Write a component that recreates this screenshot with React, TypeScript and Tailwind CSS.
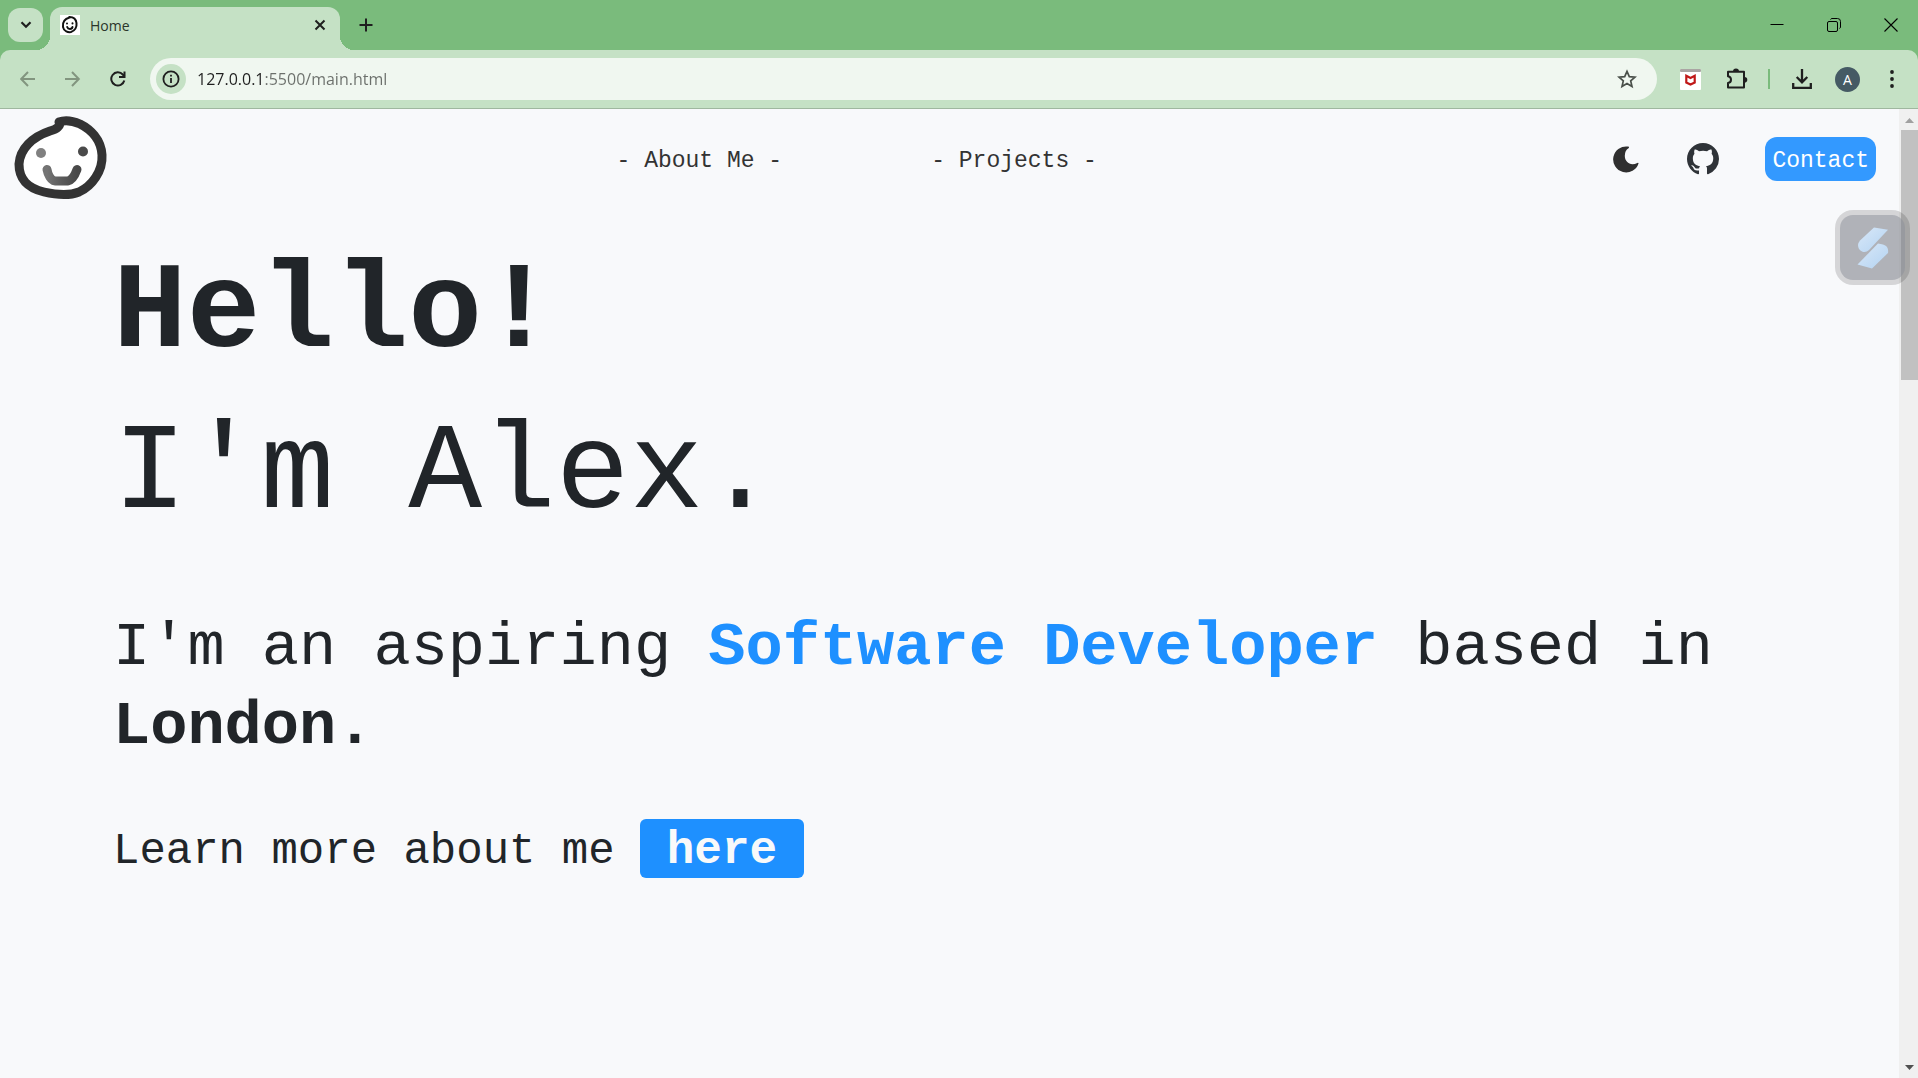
import { BsGithub } from "react-icons/bs";

function SmileLogo({ className }: { className: string }) {
  return (
    <svg viewBox="0 0 94 84" className={className} aria-hidden="true">
      <defs>
        <linearGradient id="mouth" x1="0" x2="1" y1="0" y2="0">
          <stop offset="0" stopColor="#747474" />
          <stop offset="0.5" stopColor="#5a5a5a" />
          <stop offset="1" stopColor="#484848" />
        </linearGradient>
      </defs>
      <path
        d="M45 5C47 9 43 12 36 14C18 20 6 32 5 47C5 63 14 71 30 75C43 78 55 79 65 75C78 69 89 54 88 38C87 22 76 12 66 7C58 3.500 50 3 45 5Z"
        fill="#ffffff"
        stroke="#333333"
        strokeWidth="9"
        strokeLinejoin="round"
      />
      <circle cx="27" cy="36" r="5" fill="#808080" />
      <circle cx="69" cy="34.500" r="5" fill="#4a4a4a" />
      <path d="M33 52.500C34 58 37 63 41 64H54C58 63 61 58 63 52.500" fill="none" stroke="url(#mouth)" strokeWidth="9" strokeLinecap="round" strokeLinejoin="round" />
    </svg>
  );
}

function TabStrip() {
  return (
    <div className="flex h-[50px] items-end bg-[#7abb7c] pl-2">
      <button aria-label="Search tabs" className="mb-2 flex h-[34px] w-[35px] items-center justify-center rounded-xl bg-[#c5e1c5]">
        <svg viewBox="0 0 12 8" className="h-2 w-3" fill="none" stroke="#1f1f1f" strokeWidth="2.2">
          <path d="M1.5 1.2L6 5.7L10.5 1.2" />
        </svg>
      </button>
      <span className="-ml-[7px] size-3.5 bg-[radial-gradient(circle_at_0_0,transparent_14px,#c5e1c5_14px)]" />
      <div className="flex h-[43px] w-[290px] items-center rounded-t-xl bg-[#c5e1c5] pb-[7px] pl-2.5 pr-3.5">
        <span className="flex size-5 items-center justify-center bg-white">
          <svg viewBox="0 0 20 20" className="size-5" fill="none" stroke="#111111" strokeLinecap="round">
            <path d="M9.5 2.5C4 4 2.5 8 3 12C4 16.500 8 17.500 11 17C15 16 17 12 16.500 8C16 4 13 2 9.500 2Z" strokeWidth="2" />
            <path d="M7 8.500V8.600M12.500 8.300V8.400" strokeWidth="2" />
            <path d="M7.200 12C8 14.500 12 14.500 12.500 12" strokeWidth="2" />
          </svg>
        </span>
        <span className="ml-2.5 flex-1 font-['Open_Sans',sans-serif] text-[14px] text-[#2a352a]">Home</span>
        <button aria-label="Close tab">
          <svg viewBox="0 0 12 12" className="size-3" fill="none" stroke="#1f1f1f" strokeWidth="2">
            <path d="M1.500 1.500L10.500 10.500M10.500 1.500L1.500 10.500" />
          </svg>
        </button>
      </div>
      <span className="size-3.5 bg-[radial-gradient(circle_at_100%_0,transparent_14px,#c5e1c5_14px)]" />
      <button aria-label="New tab" className="mb-[18px] ml-[5px]">
        <svg viewBox="0 0 14 14" className="size-3.5" stroke="#1f1f1f" strokeWidth="2">
          <path d="M7 .5V13.500M.5 7H13.500" />
        </svg>
      </button>
      <div className="mb-[18px] ml-auto mr-5 flex items-center gap-[43px]">
        <button aria-label="Minimize">
          <svg viewBox="0 0 14 14" className="size-3.5" stroke="#000000">
            <path d="M.5 6.500H13.500" />
          </svg>
        </button>
        <button aria-label="Restore">
          <svg viewBox="0 0 14 14" className="size-3.5" fill="none" stroke="#000000">
            <rect x=".5" y="3.500" width="10" height="10" rx="1.500" />
            <path d="M3.500 1.500Q4 .5 5 .5H10.500Q13.500 .5 13.500 3.500V9Q13.500 10 12.500 10.500" />
          </svg>
        </button>
        <button aria-label="Close">
          <svg viewBox="0 0 14 14" className="size-3.5" stroke="#000000" strokeWidth="1.100">
            <path d="M.5 .5L13.500 13.500M13.500 .5L.5 13.500" />
          </svg>
        </button>
      </div>
    </div>
  );
}

function Toolbar() {
  return (
    <div className="bg-[#7abb7c]">
      <div className="flex h-[59px] items-center rounded-t-[10px] border-b border-[#9fb79f] bg-[#c5e1c5] pr-6">
        <div className="flex w-[150px] items-center gap-[29px] pl-5">
          <button aria-label="Back">
            <svg viewBox="0 0 16 16" className="size-4" fill="none" stroke="#82957f" strokeWidth="2">
              <path d="M15 8H1.500M8 1L1.200 8L8 15" />
            </svg>
          </button>
          <button aria-label="Forward">
            <svg viewBox="0 0 16 16" className="size-4" fill="none" stroke="#82957f" strokeWidth="2">
              <path d="M0 8H14M7 1L13.800 8L7 15" />
            </svg>
          </button>
          <button aria-label="Reload">
            <svg viewBox="0 0 16 16" className="size-4" fill="none" stroke="#1f1f1f" strokeWidth="2">
              <path d="M14.300 9.500A6.600 6.600 0 1 1 12.800 3.500L14.500 5.500" />
              <path d="M14.500 .5V6H9" />
            </svg>
          </button>
        </div>
        <div className="flex h-[42px] flex-1 items-center rounded-full bg-[#f0f7f0] pl-1.5 pr-5">
          <button aria-label="View site information" className="flex size-[30px] items-center justify-center rounded-full bg-[#c5e1c5]">
            <svg viewBox="0 0 18 18" className="size-[18px]" fill="none" stroke="#1f1f1f" strokeWidth="1.800">
              <circle cx="9" cy="9" r="7.600" />
              <path d="M9 8V13M9 4.800V6.600" />
            </svg>
          </button>
          <input
            aria-label="Address"
            defaultValue="127.0.0.1:5500/main.html"
            className="ml-[11px] min-w-0 flex-1 bg-linear-to-r from-[#1f1f1f] from-[67px] to-[#6b6f6b] to-[67px] bg-clip-text font-['Open_Sans',sans-serif] text-[16px] text-transparent outline-none"
          />
          <button aria-label="Bookmark this tab">
            <svg viewBox="0 0 20 20" className="size-5" fill="none" stroke="#4a504a" strokeWidth="1.700">
              <path d="M10 2.300L12.300 7.600L18 8.100L13.700 11.900L15 17.500L10 14.500L5 17.500L6.300 11.900L2 8.100L7.700 7.600Z" />
            </svg>
          </button>
        </div>
        <button aria-label="McAfee WebAdvisor" className="ml-[23px]">
          <svg viewBox="0 0 21 21" className="size-[21px]">
            <rect width="21" height="21" rx="1" fill="#ffffff" />
            <rect width="21" height="3" rx="1" fill="#aaa5a3" />
            <path d="M6.300 6.800L10.500 9L14.700 6.800V13.500L10.500 15.500L6.300 13.500Z" fill="none" stroke="#c01818" strokeWidth="2.200" />
          </svg>
        </button>
        <button aria-label="Extensions" className="ml-[25px]">
          <svg viewBox="0 0 22 22" className="size-[22px]">
            <path d="M2 3.800H18V19.500H2V15Q5 14.500 5 11.700Q5 9 2 8.300Z" fill="none" stroke="#1f1f1f" strokeWidth="2" strokeLinejoin="round" />
            <path d="M7 3.500A3 3 0 0 1 13 3.500ZM18.500 9A2.800 2.800 0 0 1 18.500 14.600Z" fill="#1f1f1f" />
          </svg>
        </button>
        <span className="ml-5 h-5 w-0.5 bg-[#7abb7c]" />
        <button aria-label="Downloads" className="ml-[22px]">
          <svg viewBox="0 0 20 20" className="size-5" fill="none" stroke="#1f1f1f" strokeWidth="2.300">
            <path d="M10 0V13M4.700 8L10 13.300L15.300 8M1.200 14V18.800H18.800V14" />
          </svg>
        </button>
        <button aria-label="Profile" className="ml-[23px] flex size-[25px] items-center justify-center rounded-full bg-[#455a64] font-['Open_Sans',sans-serif] text-[14px] text-white">
          A
        </button>
        <button aria-label="Menu" className="ml-[30px]">
          <svg viewBox="0 0 4 18" className="h-[18px] w-1" fill="#1f1f1f">
            <circle cx="2" cy="2" r="1.900" />
            <circle cx="2" cy="9" r="1.900" />
            <circle cx="2" cy="16" r="1.900" />
          </svg>
        </button>
      </div>
    </div>
  );
}

function SiteHeader() {
  return (
    <header className="flex h-[100px] items-center justify-between pl-3.5 pr-[23px] text-[23px] text-[#333333]">
      <a href="#home" aria-label="Home">
        <SmileLogo className="h-[84px] w-[94px] overflow-visible" />
      </a>
      <nav className="mr-2 flex gap-[149px] pt-1">
        <a href="#about">- About Me -</a>
        <a href="#projects">- Projects -</a>
      </nav>
      <div className="flex items-center">
        <button aria-label="Toggle dark mode">
          <svg viewBox="0 0 26 27" className="h-[27px] w-[26px]" fill="#2f2f2f">
            <path d="M15.200 .6A13 13 0 1 0 25.600 17.200Q25.300 16.300 24.300 16.900C18 20.500 11.800 16.500 11.800 9.800Q11.800 4.500 15.500 2.200Q16.700 1 15.200 .6Z" />
          </svg>
        </button>
        <a href="#github" aria-label="GitHub" className="ml-12">
          <BsGithub className="size-8 text-[#2f3338]" />
        </a>
        <a href="#contact" className="ml-[46px] flex h-11 items-center rounded-xl bg-[#3399ff] px-[7px] pt-1 text-white">
          Contact
        </a>
      </div>
    </header>
  );
}

function Hero() {
  return (
    <main className="px-[113px] pt-6 text-[#212529]">
      <h1 className="text-[123px] leading-[161px]">
        <strong className="block font-bold">Hello!</strong>
        I'm Alex.
      </h1>
      <p className="mt-[53px] text-[62px] leading-[79px]">
        I'm an aspiring <strong className="font-bold text-[#1e90ff]">Software Developer</strong> based in{" "}
        <strong className="font-bold">London.</strong>
      </p>
      <p className="mt-[53px] flex items-baseline gap-[25px] text-[44px] leading-[53px]">
        Learn more about me
        <a href="#about" className="rounded-md bg-[#1e90ff] px-[27px] pt-1.5 text-[46px] font-bold text-[#f8f9fa]">
          here
        </a>
      </p>
    </main>
  );
}

function Scrollbar() {
  return (
    <div className="flex w-[19px] flex-col items-end bg-[#f0f0f0]" aria-hidden="true">
      <svg viewBox="0 0 17 21" className="h-[21px] w-[17px]" fill="#a0a0a0">
        <path d="M4 14L8.500 9L13 14Z" />
      </svg>
      <div className="h-[250px] w-[17px] bg-[#c1c1c1]" />
      <svg viewBox="0 0 17 21" className="mt-auto h-[21px] w-[17px]" fill="#505050">
        <path d="M4 8L8.500 13L13 8Z" />
      </svg>
    </div>
  );
}

function FloatingWidget() {
  return (
    <button aria-label="Open assistant" className="absolute right-2 top-[101px] flex size-[75px] items-center justify-center rounded-[18px] bg-black/14">
      <span className="flex size-[65px] items-center justify-center rounded-[13px] bg-[#8c8f9a]/50">
        <svg viewBox="0 0 32 42" className="h-[42px] w-8">
          <defs>
            <linearGradient id="bolt" x1="0" y1="0" x2="1" y2="1">
              <stop offset="0" stopColor="#d9e8f8" />
              <stop offset="1" stopColor="#b3d3f2" />
            </linearGradient>
          </defs>
          <path d="M17 .5L31 2.800L12 23Q9 26 5 24.500Q1 22.500 1 18Q1 16 3 13.500Z" fill="url(#bolt)" />
          <path d="M21 16.500L26 17.500Q32 19 31 26L15 41.500L.5 37.500Z" fill="url(#bolt)" />
        </svg>
      </span>
    </button>
  );
}

export default function App() {
  return (
    <div className="flex min-h-screen flex-col">
      <TabStrip />
      <Toolbar />
      <div className="relative flex flex-1 bg-[#f8f9fb] font-['Liberation_Mono',monospace]">
        <div className="min-w-0 flex-1">
          <SiteHeader />
          <Hero />
        </div>
        <Scrollbar />
        <FloatingWidget />
      </div>
    </div>
  );
}
